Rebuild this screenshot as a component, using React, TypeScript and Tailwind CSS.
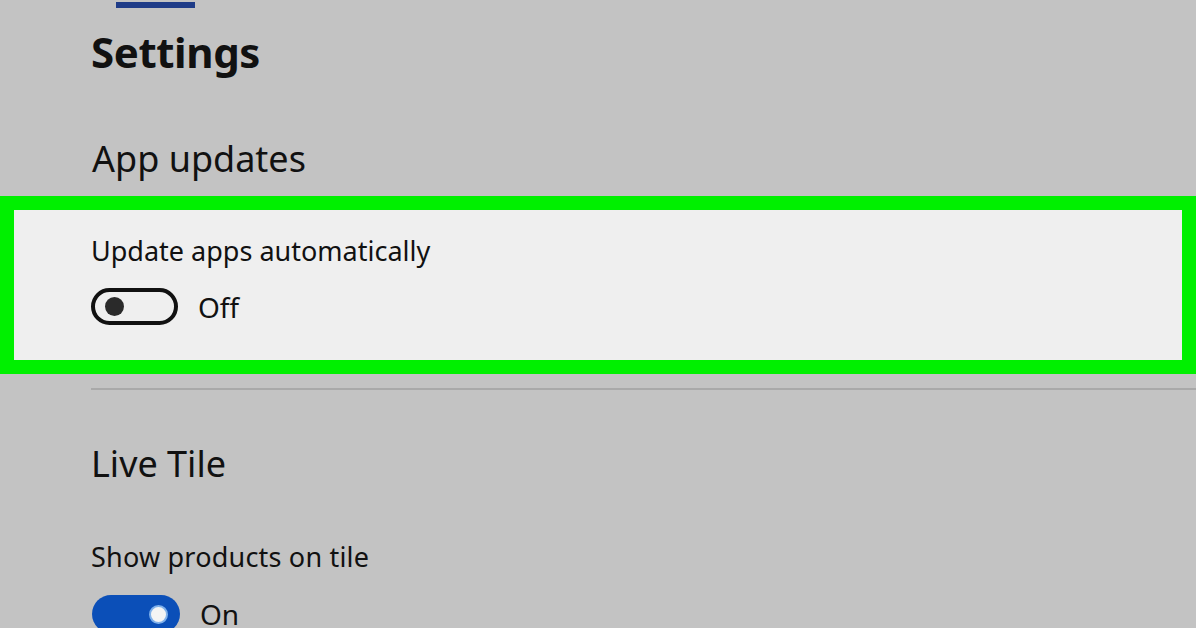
export default function App() {
  return (
    <div
      className="w-[1196px] h-[628px] overflow-hidden bg-[#c3c3c3] text-[#111]"
      style={{ fontFamily: '"Noto Sans", "Open Sans", sans-serif' }}
    >
      {/* active tab underline */}
      <div className="ml-[116px] mt-[2px] w-[79px] h-[6px] bg-[#1f3c88]" />

      <h1 className="pl-[91px] mt-[19px] h-[50px] text-[42px] leading-[50px] font-bold tracking-[-0.4px]">
        Settings
      </h1>

      <h2 className="pl-[92px] mt-[60px] h-[44px] text-[36px] leading-[44px]">App updates</h2>

      <div className="mt-[15px] h-[178px] border-[14px] border-[#00f000] bg-[#efefef] pl-[77px] pt-[24px]">
        <p className="h-[34px] text-[27px] leading-[34px]">Update apps automatically</p>
        <div className="mt-[20px] flex items-center gap-[20px]">
          <div className="w-[87px] h-[37px] rounded-full border-[4px] border-[#111] flex items-center pl-[10px]">
            <div className="w-[19px] h-[19px] rounded-full bg-[#2a2a2a]" />
          </div>
          <span className="text-[28px] leading-[34px]">Off</span>
        </div>
      </div>

      <div className="ml-[91px] mt-[14px] h-[2px] bg-[#a9a9a9]" />

      <h2 className="pl-[91px] mt-[52px] h-[44px] text-[36px] leading-[44px]">Live Tile</h2>

      <p className="pl-[91px] mt-[54px] h-[34px] text-[27px] leading-[34px] tracking-[0.2px]">
        Show products on tile
      </p>
      <div className="pl-[92px] mt-[21px] flex items-center gap-[20px]">
        <div className="w-[88px] h-[38px] rounded-full bg-[#0b4fb8] flex items-center justify-end pr-[12px]">
          <div className="w-[19px] h-[19px] rounded-full bg-[#f4f4f4] border-[2px] border-[#7fb0ea]" />
        </div>
        <span className="text-[28px] leading-[34px]">On</span>
      </div>
    </div>
  );
}
